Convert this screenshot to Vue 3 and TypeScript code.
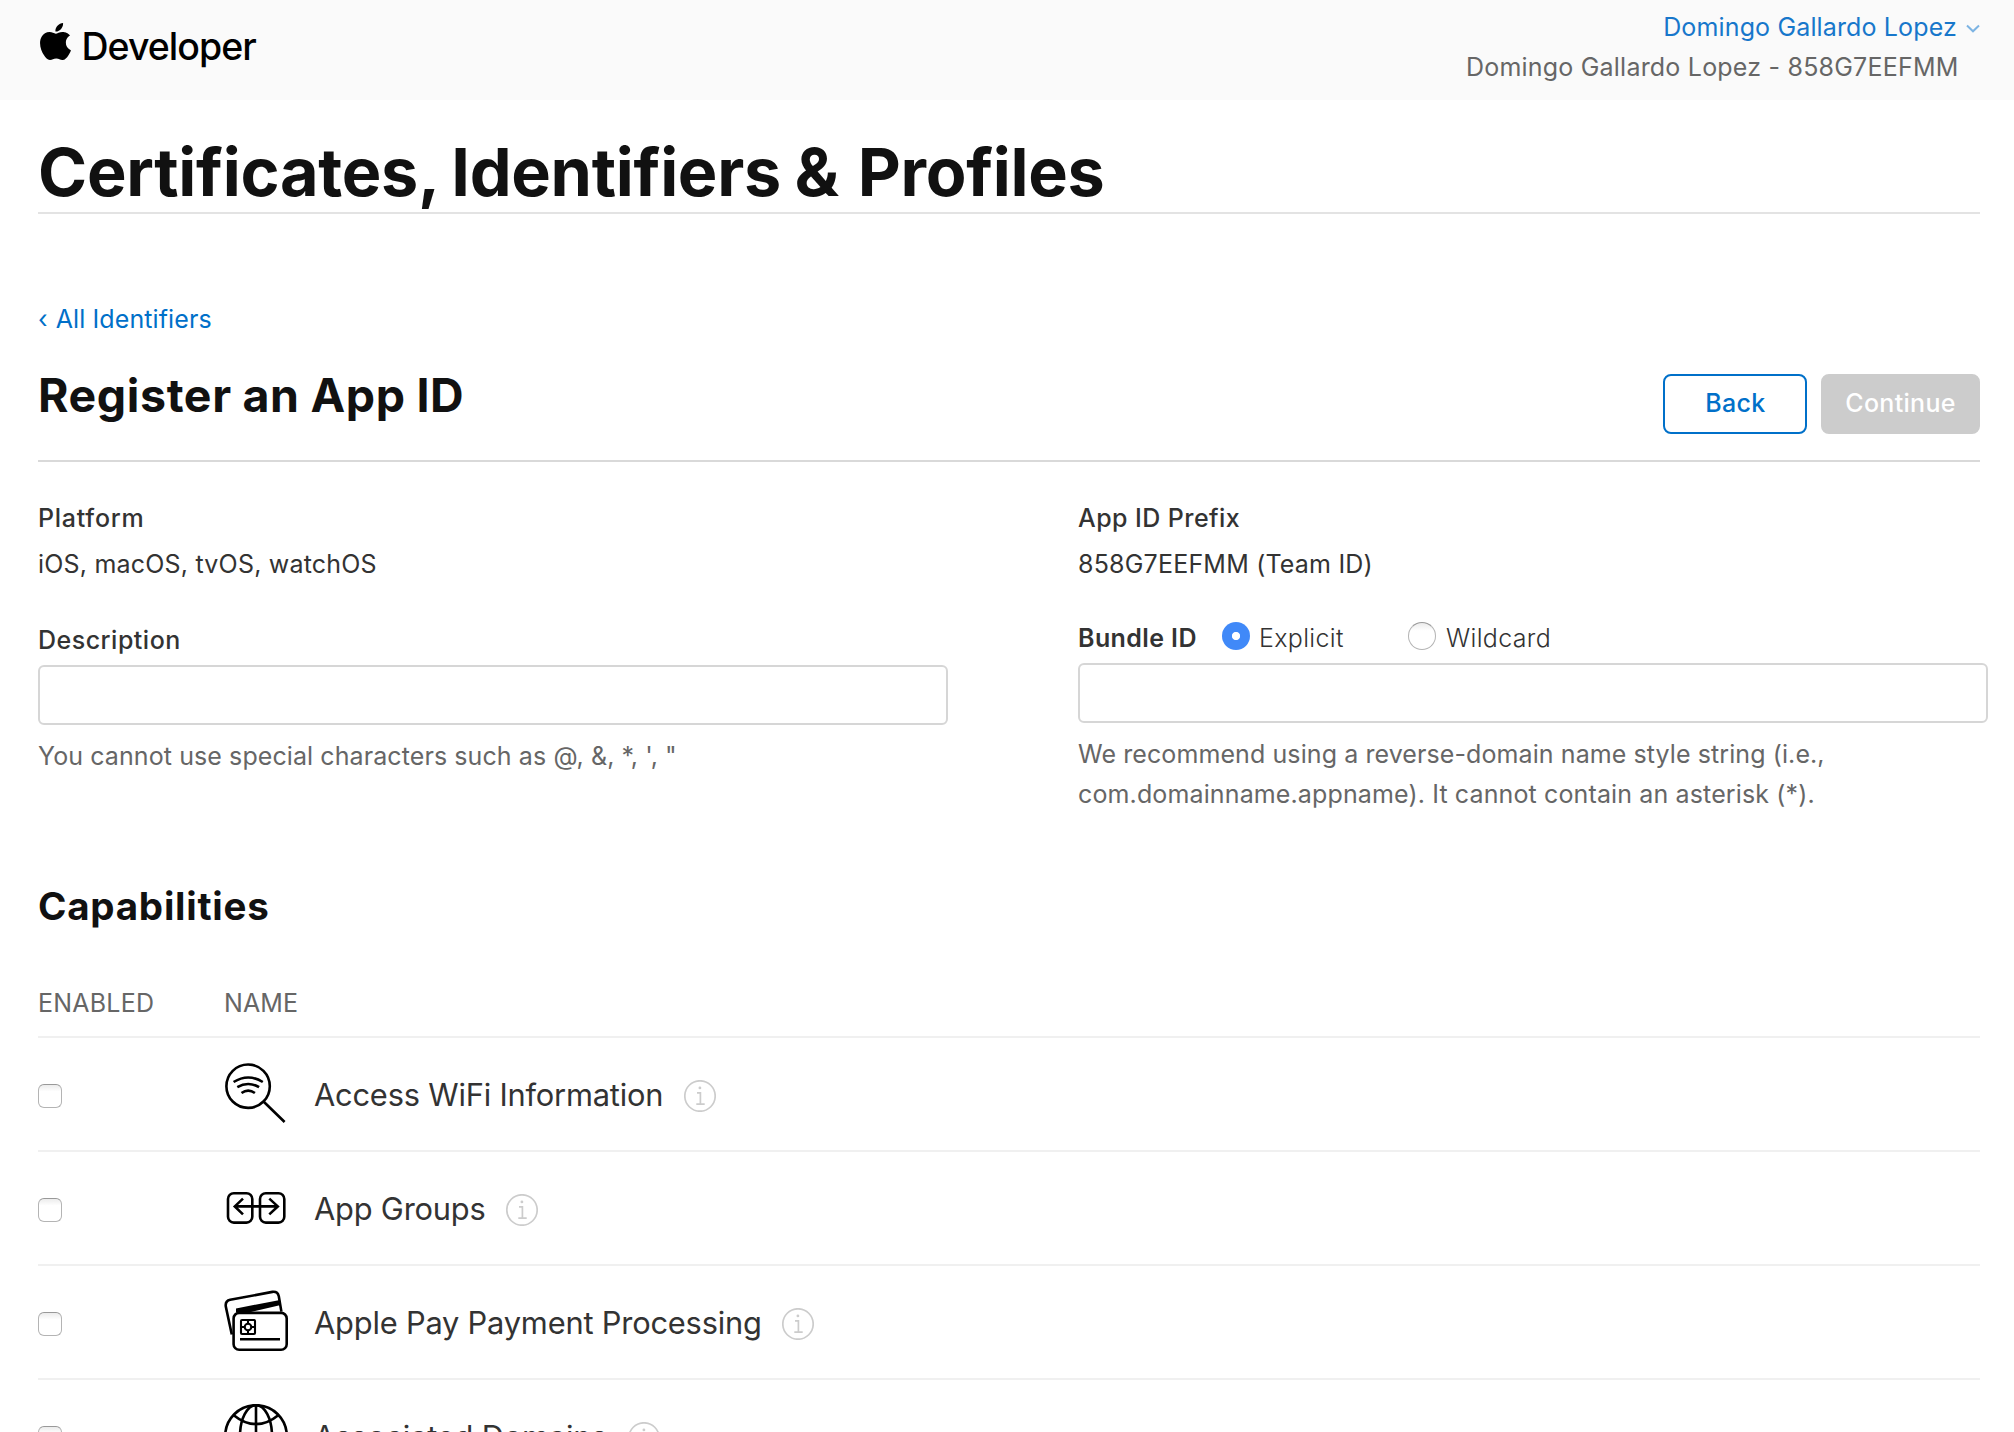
<script setup lang="ts">
import { ref } from 'vue'

type IconName = 'wifi' | 'groups' | 'pay' | 'globe'

interface Capability {
  name: string
  icon: IconName
  enabled: boolean
}

const userName = 'Domingo Gallardo Lopez'
const teamId = '858G7EEFMM'
const description = ref('')
const bundleId = ref('')
const bundleType = ref<'explicit' | 'wildcard'>('explicit')

const capabilities = ref<Capability[]>([
  { name: 'Access WiFi Information', icon: 'wifi', enabled: false },
  { name: 'App Groups', icon: 'groups', enabled: false },
  { name: 'Apple Pay Payment Processing', icon: 'pay', enabled: false },
  { name: 'Associated Domains', icon: 'globe', enabled: false },
])
</script>

<template>
  <div class="page">
    <header class="top">
      <a class="brand">
        <svg class="apple" viewBox="2.2 0 19.6 24" preserveAspectRatio="none" aria-hidden="true">
          <path
            d="M12.152 6.896c-.948 0-2.415-1.078-3.96-1.04-2.04.027-3.91 1.183-4.961 3.014-2.117 3.675-.546 9.103 1.519 12.09 1.013 1.454 2.208 3.09 3.792 3.039 1.52-.065 2.09-.987 3.935-.987 1.831 0 2.35.987 3.96.948 1.637-.026 2.676-1.48 3.676-2.948 1.156-1.688 1.636-3.325 1.662-3.415-.039-.013-3.182-1.221-3.22-4.857-.026-3.04 2.48-4.494 2.597-4.559-1.429-2.09-3.623-2.324-4.39-2.376-2-.156-3.675 1.09-4.61 1.09zM15.53 3.83c.843-1.012 1.4-2.427 1.245-3.83-1.207.052-2.662.805-3.532 1.818-.78.896-1.454 2.338-1.273 3.714 1.338.104 2.715-.688 3.559-1.701" />
        </svg>
        <span class="brand-name">Developer</span>
      </a>
      <div class="account">
        <a class="user">
          <span>{{ userName }}</span>
          <svg class="chevron" viewBox="0 0 14 10" aria-hidden="true"><path d="M1 1.5 7 7.3 13 1.5" /></svg>
        </a>
        <span class="team">{{ userName }} - {{ teamId }}</span>
      </div>
    </header>

    <main>
      <h1>Certificates, Identifiers <span class="amp">&amp;</span> Profiles</h1>
      <a class="crumb"><span>‹</span><span>All Identifiers</span></a>

      <div class="section-head">
        <h2>Register an App ID</h2>
        <div class="actions">
          <button class="btn back" type="button">Back</button>
          <button class="btn continue" type="button" disabled>Continue</button>
        </div>
      </div>

      <div class="form">
        <section class="col">
          <div class="label platform">Platform</div>
          <div class="value">iOS, macOS, tvOS, watchOS</div>
          <label class="label description" for="description">Description</label>
          <input id="description" v-model="description" class="field" type="text" />
          <p class="help">You cannot use special characters such as @, &amp;, *, ', "</p>
        </section>
        <section class="col right">
          <div class="label prefix">App ID Prefix</div>
          <div class="value">{{ teamId }} (Team ID)</div>
          <div class="bundle">
            <span class="label bundle-label">Bundle ID</span>
            <label class="option">
              <input v-model="bundleType" class="radio" type="radio" name="bundle" value="explicit" />Explicit
            </label>
            <label class="option wildcard">
              <input v-model="bundleType" class="radio" type="radio" name="bundle" value="wildcard" />Wildcard
            </label>
          </div>
          <input v-model="bundleId" class="field" type="text" aria-label="Bundle ID" />
          <p class="help">
            We recommend using a reverse-domain name style string (i.e.,<br />
            <span class="domain">com.domainname.appname). It cannot contain an asterisk (*).</span>
          </p>
        </section>
      </div>

      <h3>Capabilities</h3>
      <div class="thead"><span>ENABLED</span><span class="name-col">NAME</span></div>
      <div v-for="cap in capabilities" :key="cap.name" class="row">
        <input v-model="cap.enabled" class="check" type="checkbox" :aria-label="cap.name" />
        <svg class="cap-icon" viewBox="0 0 64 64" aria-hidden="true">
          <template v-if="cap.icon === 'wifi'">
            <circle cx="24.1" cy="24.2" r="21.7" />
            <path d="M39.5 39.5 60.6 60M9.6 20Q24.2 11 38.8 20M13.3 25.2Q24.2 18.8 35.1 25.2M17.5 31Q24.2 26.2 30.9 31" />
          </template>
          <template v-else-if="cap.icon === 'groups'">
            <rect x="4" y="17.2" width="24.3" height="29.4" rx="5.8" />
            <rect x="36" y="17.2" width="24.3" height="29.4" rx="5.8" />
            <path d="M10.8 30.4H53.8M19 22.6 10.8 30.4 19 38.4M45.3 22.6 53.8 30.4 45.3 38.4" />
          </template>
          <template v-else-if="cap.icon === 'pay'">
            <path d="M7.8 44.4 1.8 16.6Q1 10.9 6.2 9.8L48.4 1.9Q53.6 1.2 54.8 6.3L57.4 21.6" />
            <path class="solid" d="M12 18.4 56 10 56.8 14.9 27 22H12Z" />
            <rect class="card" x="9.6" y="22.9" width="53.1" height="36.9" rx="5.6" />
            <g class="chip">
              <rect x="17" y="30" width="14" height="14" rx="1" />
              <circle cx="24" cy="37" r="3.3" />
              <path d="M24 30V33.6M24 40.4V44M17 37H20.6M27.4 37H31" />
            </g>
            <path d="M16 49.2H56" />
          </template>
          <template v-else>
            <circle cx="32" cy="32" r="30.8" />
            <ellipse cx="32" cy="32" rx="16" ry="30.8" />
            <path d="M32 1.2V62.8M1.2 32H62.8M9.4 11Q32 29.4 54.6 11M9.4 53Q32 34.6 54.6 53" />
          </template>
        </svg>
        <span class="cap-name">{{ cap.name }}</span>
        <svg class="info" viewBox="0 0 32 32" aria-hidden="true">
          <circle cx="16" cy="16" r="15.2" />
          <path d="M13 12.8H16.4V24.1M12.3 24.2H20.7" />
          <circle class="dot" cx="15.9" cy="7.9" r="1.4" />
        </svg>
      </div>
    </main>
  </div>
</template>

<style>
body {
  margin: 0;
  background: #fff;
}
</style>

<style scoped>
.page {
  height: 1432px;
  overflow: hidden;
  background: #fff;
  color: #333;
  font: 400 25px/40px Inter, 'Liberation Sans', sans-serif;
  letter-spacing: 0.1px;
}

.top {
  display: flex;
  justify-content: space-between;
  box-sizing: border-box;
  height: 100px;
  padding: 7px 34px 0 40px;
  background: #fafafa;
}

.brand {
  display: flex;
  align-items: flex-start;
  gap: 10px;
  color: #000;
}

.apple {
  width: 31px;
  height: 37px;
  margin-top: 16px;
}

.brand-name {
  margin: 20px 0 0 0.5px;
  font-size: 37.5px;
  font-weight: 500;
  letter-spacing: -0.98px;
}

.account {
  display: flex;
  flex-direction: column;
  align-items: flex-end;
}

.user {
  display: flex;
  align-items: center;
  gap: 9px;
  color: #1777cb;
  letter-spacing: 0.14px;
}

.chevron {
  width: 14px;
  height: 10px;
  margin-top: 4px;
  fill: none;
  stroke: #7db4e3;
  stroke-width: 2;
}

.team {
  margin-right: 21.5px;
  color: #666;
  letter-spacing: 0.21px;
}

main {
  padding: 32px 34px 0 38px;
}

h1,
h2,
h3,
p {
  margin: 0;
  color: #111;
  font-weight: 700;
}

h1 {
  border-bottom: 2px solid #e3e3e3;
  font-size: 66.5px;
  line-height: 80px;
  letter-spacing: -0.3px;
  word-spacing: -2px;
}

.amp {
  margin-right: 5.5px;
}

.crumb {
  display: flex;
  gap: 8px;
  margin-top: 85px;
  color: #0070c9;
}

.section-head {
  display: flex;
  justify-content: space-between;
  height: 95px;
  margin-top: 26px;
  border-bottom: 2px solid #d9d9d9;
}

h2 {
  font-size: 46.5px;
  line-height: 60px;
  letter-spacing: 0.6px;
  word-spacing: -0.8px;
}

.actions {
  display: flex;
  gap: 14px;
  margin-top: 9px;
}

.btn {
  box-sizing: border-box;
  height: 60px;
  padding: 0 0 2px;
  border: 2px solid #0070c9;
  border-radius: 8px;
  background: #fff;
  color: #0070c9;
  font: 500 25px/40px Inter, 'Liberation Sans', sans-serif;
  letter-spacing: 0.31px;
}

.back {
  width: 144px;
  padding-left: 1px;
}

.continue {
  width: 159px;
  border-color: #ccc;
  background: #ccc;
  color: #fff;
}

.form {
  display: flex;
  gap: 130px;
  margin-top: 36px;
}

.col {
  display: flex;
  flex: none;
  flex-direction: column;
  width: 910px;
}

.label {
  font-weight: 500;
  letter-spacing: 0.5px;
}

.platform {
  letter-spacing: 0.75px;
}

.prefix {
  letter-spacing: 0.43px;
}

.value {
  margin-top: 6px;
  letter-spacing: 0.2px;
}

.description {
  margin-top: 36px;
}

.field {
  box-sizing: border-box;
  width: 910px;
  height: 60px;
  margin: 5px 0 0;
  padding: 0 16px;
  border: 2px solid #d6d6d6;
  border-radius: 6px;
  outline: none;
  background: #fff;
  font: inherit;
}

.help {
  margin-top: 11px;
  color: #666;
  font-weight: 400;
  letter-spacing: 0.09px;
}

.domain {
  letter-spacing: 0.13px;
}

.bundle {
  display: flex;
  align-items: center;
  height: 40px;
  margin-top: 34px;
}

.bundle-label {
  width: 144px;
  font-weight: 600;
  letter-spacing: 0.4px;
}

.option {
  display: flex;
  align-items: center;
  width: 186px;
  font-weight: 300;
  letter-spacing: 0.33px;
}

.radio {
  appearance: none;
  box-sizing: border-box;
  flex: none;
  width: 28px;
  height: 28px;
  margin: -4px 9px 0 0;
  border: 1.5px solid #b4b4b4;
  border-top-color: #999;
  border-radius: 50%;
  background: linear-gradient(#ececec, #fff 30%);
}

.wildcard .radio {
  margin-right: 10px;
}

.radio:checked {
  border: 0;
  background: radial-gradient(circle, #fff 0 3.7px, #4089f8 4.5px);
}

h3 {
  margin-top: 67px;
  font-size: 38.5px;
  line-height: 50px;
  letter-spacing: 0.76px;
}

.thead {
  display: flex;
  height: 53px;
  margin-top: 52px;
  border-bottom: 2px solid #f0f0f0;
  color: #666;
  letter-spacing: 0.22px;
}

.thead span {
  width: 186px;
}

.thead .name-col {
  letter-spacing: 0.1px;
}

.row {
  display: flex;
  align-items: center;
  height: 112px;
  border-bottom: 2px solid #f0f0f0;
}

.check {
  appearance: none;
  box-sizing: border-box;
  width: 24px;
  height: 24px;
  margin: 4px 162px 0 0;
  border: 1.5px solid #b4b4b4;
  border-top-color: #999;
  border-radius: 6px;
  background: linear-gradient(#ececec, #fff 30%);
}

.cap-icon {
  flex: none;
  width: 64px;
  height: 64px;
  fill: none;
  stroke: #000;
  stroke-width: 2.6;
}

.cap-icon .solid {
  fill: #000;
  stroke: none;
}

.cap-icon .card {
  fill: #fff;
}

.cap-icon .chip {
  stroke-width: 2.1;
}

.cap-name {
  margin: 2px 0 0 26px;
  font-size: 30.8px;
  letter-spacing: -0.19px;
}

.info {
  flex: none;
  width: 32px;
  height: 32px;
  margin: 4px 0 0 20.5px;
  fill: none;
  stroke: #ccc;
  stroke-width: 1.7;
}

.info .dot {
  fill: #ccc;
  stroke: none;
}
</style>
